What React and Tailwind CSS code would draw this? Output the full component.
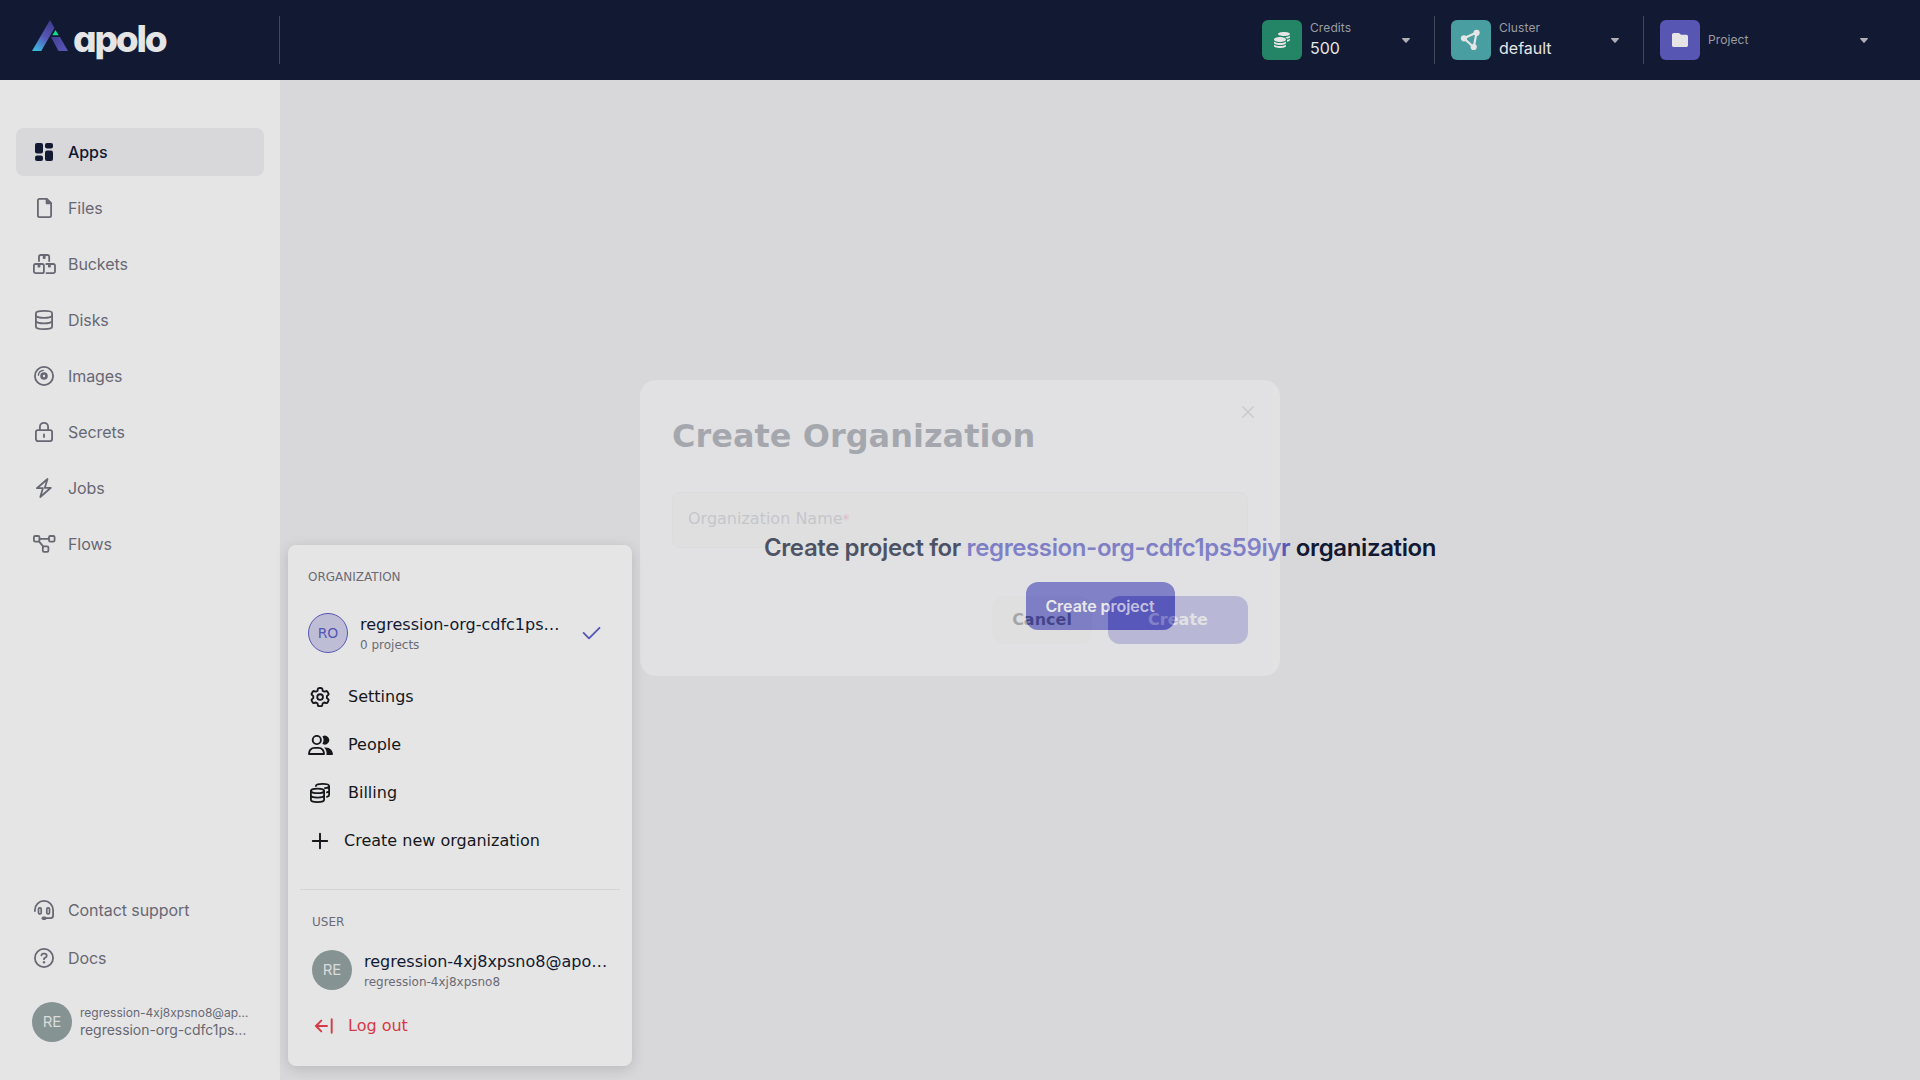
import React from "react";
import { FaGear } from "react-icons/fa6";
import { FaCoins } from "react-icons/fa";

const Svg = ({ w = 24, h = 24, sw = 1.8, children }) => (
  <svg
    width={w}
    height={h}
    viewBox={`0 0 ${w} ${h}`}
    fill="none"
    stroke="currentColor"
    strokeWidth={sw}
    strokeLinecap="round"
    strokeLinejoin="round"
    className="shrink-0 overflow-visible"
  >
    {children}
  </svg>
);

const Logo = () => (
  <div className="flex h-20 items-start pt-5">
    <svg width="36" height="31" viewBox="0 0 36 31" className="shrink-0">
      <defs>
        <linearGradient id="leg" x1="0.75" y1="0" x2="0.2" y2="1">
          <stop offset="0" stopColor="#3f3d8e" />
          <stop offset="0.5" stopColor="#5856b6" />
          <stop offset="1" stopColor="#3cb8e0" />
        </linearGradient>
        <linearGradient id="foot" x1="0" y1="0" x2="1" y2="1">
          <stop offset="0" stopColor="#433f96" />
          <stop offset="1" stopColor="#5a57ba" />
        </linearGradient>
      </defs>
      <path d="M18 0 L22.5 8 L9.3 31 L0 31 Z" fill="url(#leg)" />
      <path d="M19 17 L28 17 L36 31 L26.5 31 Z" fill="url(#foot)" />
      <path d="M23.5 10 L26.7 15.2 L20.3 15.2 Z" fill="#09e08c" />
    </svg>
    <span className="-mt-1 ml-[5px] font-['Inter',sans-serif] text-[37px] leading-[45px] font-extrabold tracking-[-2.200px] text-[#e5e5e5] [font-feature-settings:'cv11'_1]">
      apolo
    </span>
  </div>
);

const AppsIcon = () => (
  <svg width="24" height="24" viewBox="0 0 24 24" fill="currentColor" className="shrink-0">
    <rect x="3" y="3" width="8" height="10.5" rx="2" />
    <rect x="3" y="15.5" width="8" height="5.5" rx="2" />
    <rect x="13" y="3" width="8" height="5.5" rx="2" />
    <rect x="13" y="10.5" width="8" height="10.5" rx="2" />
  </svg>
);

const FilesIcon = () => (
  <Svg>
    <path d="M7.5 2.9h7.3l4.3 4.3v12.3a1.6 1.6 0 0 1-1.6 1.6h-10a1.6 1.6 0 0 1-1.6-1.6v-15a1.6 1.6 0 0 1 1.6-1.6z" />
    <path d="M14.6 3.2v4.2h4.2z" fill="currentColor" />
  </Svg>
);

const BucketsIcon = () => (
  <Svg>
    <path d="M7 9V4.7A1.7 1.7 0 0 1 8.7 3h6.8a1.7 1.7 0 0 1 1.7 1.7V9" />
    <rect x="1.9" y="12" width="10" height="9.1" rx="1.7" />
    <path d="M14.3 12h7a1.7 1.7 0 0 1 1.7 1.7v5.7a1.7 1.7 0 0 1-1.7 1.7h-6.8" />
    <path d="M11.5 3.3h1.4v2.9h-1.4zM6.3 12.3h1.4v2.5H6.3zM16.7 12.3h1.4v2.5h-1.4z" fill="currentColor" strokeWidth="1.4" />
  </Svg>
);

const DisksIcon = () => (
  <Svg>
    <path d="M3.9 5.2C3.9 3.7 7.5 2.9 12 2.9s8.1.8 8.1 2.3v13.6c0 1.5-3.6 2.3-8.1 2.3s-8.1-.8-8.1-2.3z" />
    <path d="M3.9 7.8c1.2 1.4 4.3 2 8.1 2s6.9-.6 8.1-2M3.9 13.4c1.2 1.4 4.3 2 8.1 2s6.9-.6 8.1-2" />
  </Svg>
);

const ImagesIcon = () => (
  <Svg>
    <circle cx="12" cy="12" r="9.1" />
    <circle cx="12" cy="12" r="2.5" strokeWidth="2.6" />
    <path d="M6.4 11.2a5.5 5.5 0 0 1 4.9-4.8" strokeWidth="1.4" />
  </Svg>
);

const SecretsIcon = () => (
  <Svg>
    <rect x="3.9" y="10.1" width="16.2" height="11" rx="2" />
    <path d="M7.9 10V6.9a4.1 4.1 0 0 1 8.2 0V10M12 14.3v2.7" />
  </Svg>
);

const JobsIcon = () => (
  <Svg>
    <path d="M15.5 3 4.9 12.2h6L8.3 21l10.5-9.2h-6z" />
  </Svg>
);

const FlowsIcon = () => (
  <Svg>
    <rect x="1.9" y="4" width="5.6" height="5.6" rx="1.3" />
    <rect x="17" y="4" width="5.6" height="5.6" rx="1.3" />
    <rect x="10.8" y="14.3" width="5.6" height="5.6" rx="1.3" />
    <path d="M7.5 6.9H17M7 9.4l4.3 5.2" />
  </Svg>
);

const SupportIcon = () => (
  <Svg>
    <path d="M2.9 13v-1a9.1 9.1 0 0 1 18.2 0v5.5a2.6 2.6 0 0 1-2.6 2.6H13" />
    <rect x="6.5" y="9.9" width="2.7" height="6" rx="1.1" strokeWidth="1.7" />
    <rect x="14.8" y="9.9" width="2.7" height="6" rx="1.1" strokeWidth="1.7" />
    <path d="M11.3 20.2h1.6" strokeWidth="3.4" />
  </Svg>
);

const DocsIcon = () => (
  <Svg>
    <circle cx="12" cy="12" r="9.1" />
    <path d="M9.4 9.4c.2-1.1 1-1.7 2.2-1.7h.9c1.3 0 2.2.8 2.2 2 0 .9-.5 1.4-1.2 1.8l-1.5.9v.8" />
    <path d="M12 16.2v.1" strokeWidth="2.4" />
  </Svg>
);

const PeopleIcon = () => (
  <svg width="25" height="20" viewBox="0 0 25 20" className="shrink-0">
    <g fill="none" stroke="currentColor" strokeWidth="1.9">
      <circle cx="8.8" cy="5" r="4.1" />
      <path d="M1 19.050c-.1-3.500 2.200-6.150 5.400-6.150h4.200c3.200 0 5.500 2.650 5.400 6.150z" strokeLinejoin="round" />
    </g>
    <path d="M14.4 1.4a4.4 4.4 0 1 1 0 7.4 6.9 6.9 0 0 0 0-7.4z" fill="currentColor" />
    <path d="M16.1 12.4h1.7c4.2 0 7 3 7.2 6.8 0 .5-.4.8-.8.8h-5.7c.5-3.3-.4-5.8-2.4-7.6z" fill="currentColor" />
  </svg>
);

const BillingIcon = () => (
  <Svg w={20} h={20}>
    <ellipse cx="7.5" cy="7.9" rx="6.6" ry="2.3" />
    <path d="M.9 7.9v8.9c0 1.3 2.9 2.3 6.6 2.3s6.6-1 6.6-2.3V7.9M.9 12.3c0 1.3 2.9 2.3 6.6 2.3s6.6-1 6.6-2.3" />
    <path d="M5.9 3C5.9 1.7 8.8.9 12.500.9s6.600.9 6.600 2.100-1.700 1.900-4.200 2.200M19.1 3v8.9c0 .9-.8 1.5-2.2 1.9M19.1 7.4c0 .9-.8 1.5-2.2 1.9" />
  </Svg>
);

const navItems = [
  ["Apps", AppsIcon],
  ["Files", FilesIcon],
  ["Buckets", BucketsIcon],
  ["Disks", DisksIcon],
  ["Images", ImagesIcon],
  ["Secrets", SecretsIcon],
  ["Jobs", JobsIcon],
  ["Flows", FlowsIcon],
];

const Caret = () => (
  <svg width="8" height="5" viewBox="0 0 8 5" className="shrink-0">
    <path d="M.6 0h6.8c.6 0 .8.6.4 1L4.6 4.6c-.3.4-.9.4-1.2 0L.2 1C-.2.6 0 0 .6 0z" fill="#b0aeb4" />
  </svg>
);

const HeaderItem = ({ box, icon, label, value, className }) => (
  <div className={`flex items-center ${className}`}>
    <div className={`flex size-10 shrink-0 items-center justify-center rounded-md text-[#e5e5e5] ${box}`}>{icon}</div>
    <div className="ml-2 flex-1">
      <div className="text-xs leading-4 tracking-[0.1px] text-[#9c9ca3]">{label}</div>
      {value && <div className="text-base leading-6 text-[#e5e5e5]">{value}</div>}
    </div>
    <Caret />
  </div>
);

const Header = () => (
  <header className="flex h-20 items-center bg-[#121932]">
    <div className="flex h-20 w-[279px] pl-8">
      <Logo />
    </div>
    <div className="h-12 w-px bg-[#424656]" />
    <div className="flex-1" />
    <HeaderItem box="bg-[#238565]" icon={<FaCoins size={16} />} label="Credits" value="500" className="w-[148px]" />
    <div className="ml-6 h-12 w-px bg-[#424656]" />
    <HeaderItem
      box="bg-[#489ea1]"
      icon={
        <svg width="20" height="20" viewBox="0 0 20 20" fill="currentColor" className="overflow-visible">
          <path d="M3 8.3 15.6 2.5 12.7 17.2z" fill="none" stroke="currentColor" strokeWidth="2.2" />
          <circle cx="3" cy="8.3" r="3.1" />
          <circle cx="15.6" cy="2.8" r="3.1" />
          <circle cx="12.7" cy="17" r="3.1" />
        </svg>
      }
      label="Cluster"
      value="default"
      className="ml-4 w-[168px]"
    />
    <div className="ml-6 h-12 w-px bg-[#424656]" />
    <HeaderItem
      box="bg-[#5757b3]"
      icon={
        <svg width="16" height="14" viewBox="0 0 16 14" fill="currentColor">
          <path d="M1.8 0h4.5c.6 0 1 .2 1.4.6L9 1.8h5.2c1 0 1.8.8 1.8 1.8v8.6c0 1-.8 1.8-1.8 1.8H1.8C.8 14 0 13.2 0 12.2V1.8C0 .8.8 0 1.8 0z" />
        </svg>
      }
      label="Project"
      className="mr-[52px] ml-4 w-[208px]"
    />
  </header>
);

const Sidebar = () => (
  <aside className="flex w-[280px] flex-col bg-[#e5e5e5] px-4 pt-12 text-base tracking-[-0.08px] text-[#686874]">
    <nav className="flex flex-col gap-2">
      {navItems.map(([name, Icon]) => (
        <a
          key={name}
          className={`flex h-12 items-center gap-3 rounded-lg px-4 ${name === "Apps" ? "bg-[#d8d8da] font-medium text-[#121932]" : ""}`}
        >
          <Icon />
          {name}
        </a>
      ))}
    </nav>
    <div className="mt-auto flex flex-col">
      <a className="flex h-12 items-center gap-3 px-4">
        <SupportIcon />
        Contact support
      </a>
      <a className="flex h-12 items-center gap-3 px-4">
        <DocsIcon />
        Docs
      </a>
    </div>
    <div className="mt-5 mb-[38px] flex h-10 items-center px-4">
      <div className="flex size-10 shrink-0 items-center justify-center rounded-full bg-[#869393] text-[15px] text-[#d9dcdc]">RE</div>
      <div className="ml-2 pb-[2px] whitespace-nowrap">
        <div className="text-xs leading-[17px] tracking-[0.02px]">regression-4xj8xpsno8@ap…</div>
        <div className="text-sm leading-[17px] tracking-[-0.04px]">regression-org-cdfc1ps…</div>
      </div>
    </div>
  </aside>
);

const MenuRow = ({ icon, children }) => (
  <div className="flex h-12 items-center pl-2">
    <div className="flex w-6 shrink-0 justify-center">{icon}</div>
    <span className="ml-4">{children}</span>
  </div>
);

const AccountMenu = () => (
  <div className="absolute top-[545px] left-[288px] flex h-[521px] w-[344px] flex-col rounded-lg bg-[#e5e5e5] p-3 font-['DejaVu_Sans',sans-serif] text-base text-[#16171b] shadow-[0_3px_14px_rgba(0,0,0,0.15)]">
    <div className="flex h-10 items-center pl-2 text-xs text-[#6b6b76]">ORGANIZATION</div>
    <div className="mb-1 flex h-[72px] items-center pl-2">
      <div className="flex size-10 shrink-0 items-center justify-center rounded-full border border-[#5757b5] bg-[#bdbdd5] text-sm text-[#5757b5]">RO</div>
      <div className="ml-3 flex-1 whitespace-nowrap">
        <div className="leading-6 text-[#121932]">regression-org-cdfc1ps…</div>
        <div className="text-xs leading-4 text-[#6b6b76]">0 projects</div>
      </div>
      <span className="mr-5 text-[#5757b5]">
        <Svg w={17} h={12} sw={1.9}>
          <path d="M.6 5.9 6 11.3 16.5.8" />
        </Svg>
      </span>
    </div>
    <MenuRow icon={<FaGear size={18.2} stroke="currentColor" strokeWidth="52" strokeLinejoin="round" className="overflow-visible fill-none" />}>
      Settings
    </MenuRow>
    <MenuRow
      icon={
        <span className="shrink-0">
          <PeopleIcon />
        </span>
      }
    >
      People
    </MenuRow>
    <MenuRow icon={<BillingIcon />}>Billing</MenuRow>
    <div className="flex h-12 items-center pl-3">
      <Svg w={16} h={16} sw={1.9}>
        <path d="M8 .8v14.4M.8 8h14.4" />
      </Svg>
      <span className="ml-4">Create new organization</span>
    </div>
    <div className="mt-6 h-px bg-[#d5d5d8]" />
    <div className="flex h-[60px] items-center pt-1 pl-3 text-xs text-[#6b6b76]">USER</div>
    <div className="flex h-10 items-center pl-3">
      <div className="flex size-10 shrink-0 items-center justify-center rounded-full bg-[#869393] font-['Inter',sans-serif] text-[15px] text-[#d9dcdc]">RE</div>
      <div className="ml-3 whitespace-nowrap">
        <div className="leading-6 text-[#121932]">regression-4xj8xpsno8@apo…</div>
        <div className="text-xs leading-4 text-[#6b6b76]">regression-4xj8xpsno8</div>
      </div>
    </div>
    <div className="mt-3 flex h-12 items-center pl-[15px] text-[#d63a47]">
      <Svg w={18} h={14} sw={1.9}>
        <path d="M12 7H1.2M6.3 1.6.9 7l5.4 5.4M16.7.3v13.4" />
      </Svg>
      <span className="ml-[15px]">Log out</span>
    </div>
  </div>
);

const CreateOrganizationModal = () => (
  <div className="absolute top-[380.4px] left-[640px] flex h-[296px] w-[640px] flex-col rounded-2xl bg-white p-8 font-['DejaVu_Sans',sans-serif] opacity-25">
    <div className="flex justify-between">
      <h2 className="text-[32px] leading-[48px] font-bold text-[#111830]">Create Organization</h2>
      <span className="-mt-[6px] -mr-[6px] text-[#a0a0a8]">
        <Svg w={12} h={12} sw={1.5}>
          <path d="M.8.8l10.400 10.400M11.200.8.8 11.200" />
        </Svg>
      </span>
    </div>
    <div className="mt-8 h-14 rounded-lg border border-[#ebebed] bg-[#f4f4f5] px-[15px] pt-[14px] text-base leading-6 text-[#90909a]">
      Organization Name<span className="text-sm text-[#f0606e]">*</span>
    </div>
    <div className="mt-12 flex justify-end gap-4 text-base font-bold">
      <button className="h-12 w-[100px] rounded-xl bg-[#f4f4f5] text-[#0d0d0d]">Cancel</button>
      <button className="h-12 w-[140px] rounded-xl bg-[#5b57cc] text-white">Create</button>
    </div>
  </div>
);

export default function App() {
  return (
    <div className="relative flex h-[1080px] w-full flex-col overflow-hidden bg-[#d8d8da] font-['Inter',sans-serif]">
      <Header />
      <div className="flex flex-1">
        <Sidebar />
        <main className="flex flex-1 flex-col items-center justify-center gap-4">
          <h1 className="text-2xl leading-9 font-semibold tracking-[-0.38px] text-[#121932]">
            Create project for <span className="text-[#5757b5]">regression-org-cdfc1ps59iyr</span> organization
          </h1>
          <button className="h-12 w-[149px] rounded-xl bg-[#5757b5] text-base font-semibold tracking-[-0.05px] text-[#e5e5e5]">Create project</button>
        </main>
      </div>
      <AccountMenu />
      <CreateOrganizationModal />
    </div>
  );
}
